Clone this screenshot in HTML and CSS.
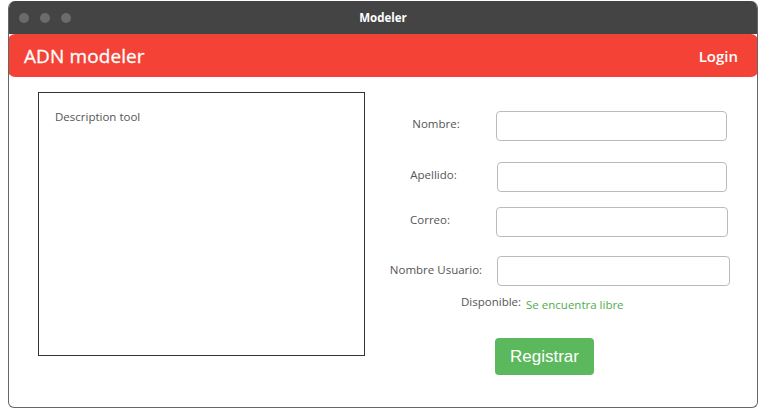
FILE: index.html
```html
<!DOCTYPE html>
<html lang="es">
<head>
<meta charset="utf-8">
<title>Modeler</title>
<link rel="stylesheet" href="styles.css">
</head>
<body>
<div class="window">
  <div class="titlebar">
    <div class="dots"><span class="dot"></span><span class="dot"></span><span class="dot"></span></div>
    <div class="title">Modeler</div>
  </div>
  <div class="appbar">
    <div class="brand">ADN modeler</div>
    <div class="login">Login</div>
  </div>
  <div class="content">
    <div class="desc">Description tool</div>
    <form class="form">
      <div class="row r1"><label class="lbl">Nombre:</label><input class="inp" type="text"></div>
      <div class="row r2"><label class="lbl">Apellido:</label><input class="inp" type="text"></div>
      <div class="row r3"><label class="lbl">Correo:</label><input class="inp" type="text"></div>
      <div class="row r4"><label class="lbl">Nombre Usuario:</label><input class="inp" type="text"></div>
      <div class="avail"><span class="avail-lbl">Disponible:</span><span class="avail-ok">Se encuentra libre</span></div>
      <div class="actions"><button type="button" class="btn">Registrar</button></div>
    </form>
  </div>
</div>
</body>
</html>
```
FILE: styles.css
```css
* { box-sizing: border-box; }
html, body { margin: 0; padding: 0; background: #fff; }
body { font-family: "Open Sans", "Noto Sans", sans-serif; }

.window {
  margin: 1px 0 0 8px;
  width: 750px;
  height: 407px;
  border: 1px solid #666;
  border-top: none;
  border-radius: 7px 7px 6px 6px;
  display: flex;
  flex-direction: column;
  overflow: hidden;
  background: #fff;
}
.titlebar {
  height: 33px;
  background: #444444;
  display: flex;
  align-items: center;
  position: relative;
  flex: none;
}
.dots { display: flex; gap: 11px; padding-left: 10px; }
.dot { width: 10px; height: 10px; border-radius: 50%; background: #6b6b6b; }
.title {
  position: absolute;
  left: 0; right: 0;
  text-align: center;
  color: #fff;
  font-weight: 700;
  font-size: 11.5px;
  top: 9px;
}
.appbar {
  height: 43px;
  background: #f44336;
  border-radius: 7px;
  display: flex;
  align-items: center;
  justify-content: space-between;
  padding: 0 20px 0 16px;
  color: #fff;
  flex: none;
  margin: 0 -1px;
}
.brand { font-size: 19px; font-weight: 500; letter-spacing: 0.1px; -webkit-text-stroke: 0.3px #fff; }
.login { font-size: 15px; font-weight: 600; }

.content {
  display: flex;
  padding: 15px 0 0 29px;
}
.desc {
  width: 327px;
  height: 264px;
  border: 1.5px solid #333;
  padding: 16px 16px;
  font-size: 11.5px;
  color: #555;
  flex: none;
}
.form {
  margin-left: 21px;
  display: flex;
  flex-direction: column;
  width: 360px;
}
.row { display: flex; align-items: center; }
.lbl {
  width: 100px;
  text-align: center;
  font-size: 11.5px;
  color: #555;
  flex: none;
  margin-bottom: 5px;
}
.inp {
  width: 231px;
  height: 30px;
  border: 1px solid #bbb;
  border-radius: 4px;
  background: #fff;
  margin-left: 10px;
}
.r1 { margin-top: 19px; }
.r2 { margin-top: 21px; }
.r2 .lbl { padding-right: 5px; }
.r2 .inp { margin-left: 11px; width: 230px; }
.r3 { margin-top: 15px; }
.r3 .lbl { padding-right: 12px; }
.r3 .inp { width: 232px; }
.r4 { margin-top: 19px; }
.r4 .lbl { margin-bottom: 3px; }
.r4 .inp { margin-left: 11px; width: 233px; }
.avail {
  margin-top: 8px;
  padding-left: 75px;
  display: flex;
  align-items: flex-end;
  gap: 5px;
}
.avail-lbl { font-size: 11.5px; color: #555; }
.avail-ok { font-size: 11.5px; color: #4cae4c; position: relative; top: 3px; }
.actions { margin-top: 29px; padding-left: 109px; }
.btn {
  width: 99px;
  height: 37px;
  background: #5cb85c;
  border: none;
  border-radius: 4px;
  color: #fff;
  font-family: "Liberation Sans", Arial, sans-serif;
  font-size: 17px;
  padding: 0;
}
```
